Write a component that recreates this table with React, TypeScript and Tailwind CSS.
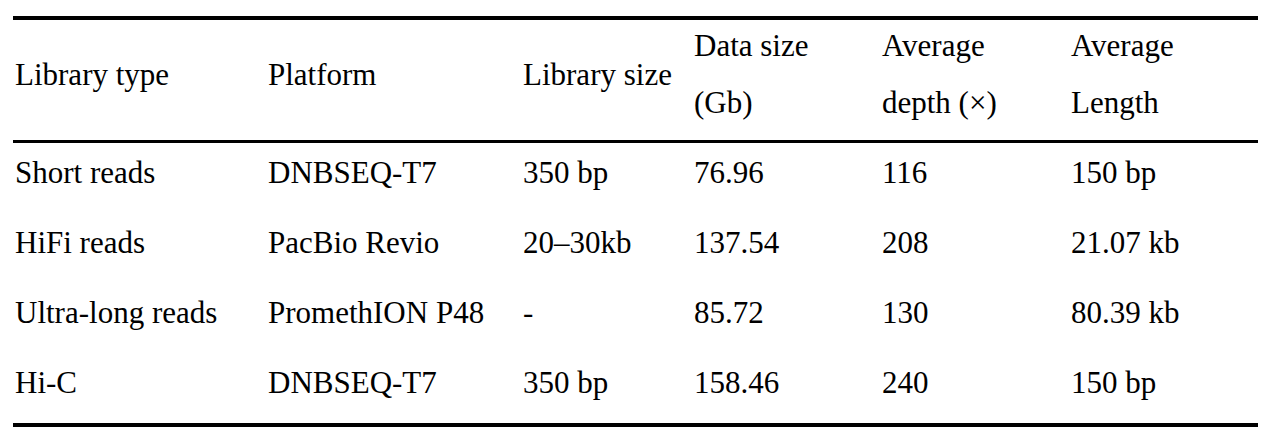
const header = [
  ["Library type"],
  ["Platform"],
  ["Library size"],
  ["Data size", "(Gb)"],
  ["Average", "depth (×)"],
  ["Average", "Length"],
];

const rows = [
  ["Short reads", "DNBSEQ-T7", "350 bp", "76.96", "116", "150 bp"],
  ["HiFi reads", "PacBio Revio", "20–30kb", "137.54", "208", "21.07 kb"],
  ["Ultra-long reads", "PromethION P48", "-", "85.72", "130", "80.39 kb"],
  ["Hi-C", "DNBSEQ-T7", "350 bp", "158.46", "240", "150 bp"],
];

const cols = "grid grid-cols-[253px_255px_171px_188px_189px_1fr] pl-[2px]";

export default function App() {
  return (
    <div className="w-[1266px] h-[447px] bg-white text-black pt-4 font-['Liberation_Serif','Times_New_Roman',serif]">
      <div className="ml-[13px] w-[1245px] text-[31px] leading-[57px]">
        <div className="border-t-[4px] border-b-[3px] border-black">
          <div className={`${cols} h-[120px] items-start`}>
            {header.map((lines, i) => (
              <div
                key={i}
                className={lines.length > 1 ? "flex flex-col -mt-[3px]" : "flex flex-col mt-[26px]"}
              >
                {lines.map((l) => (
                  <span key={l} className="whitespace-nowrap">
                    {l}
                  </span>
                ))}
              </div>
            ))}
          </div>
        </div>
        <div className="border-b-[4px] border-black">
          {rows.map((r, i) => (
            <div key={i} className={`${cols} h-[70px] items-center pb-[12px]`}>
              {r.map((c, j) => (
                <span key={j} className="whitespace-nowrap">
                  {c}
                </span>
              ))}
            </div>
          ))}
        </div>
      </div>
    </div>
  );
}
